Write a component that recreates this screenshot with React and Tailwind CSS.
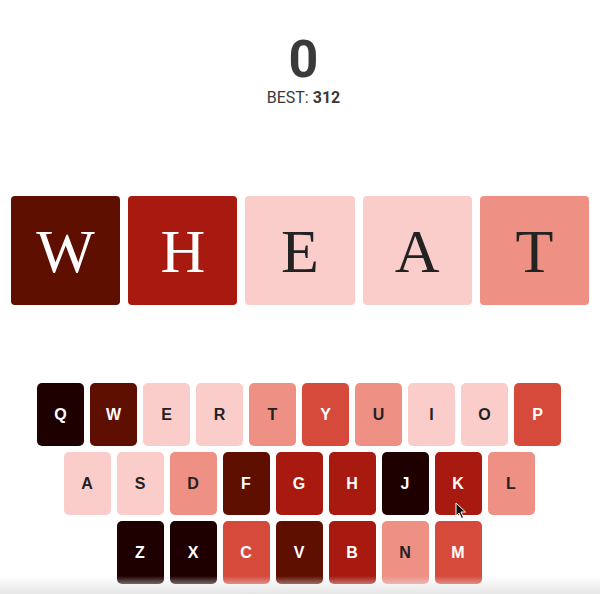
import React from 'react';

const shades = {
  0: 'bg-[#1f0000] text-white',
  1: 'bg-[#5f0f00] text-white',
  2: 'bg-[#a8190f] text-white',
  3: 'bg-[#d64a3c] text-white',
  4: 'bg-[#ef9085] text-[#222222]',
  5: 'bg-[#facdcb] text-[#222222]',
};

const tiles = [
  ['W', 1],
  ['H', 2],
  ['E', 5],
  ['A', 5],
  ['T', 4],
];

const rows = [
  [['Q', 0], ['W', 1], ['E', 5], ['R', 5], ['T', 4], ['Y', 3], ['U', 4], ['I', 5], ['O', 5], ['P', 3]],
  [['A', 5], ['S', 5], ['D', 4], ['F', 1], ['G', 2], ['H', 2], ['J', 0], ['K', 2], ['L', 4]],
  [['Z', 0], ['X', 0], ['C', 3], ['V', 1], ['B', 2], ['N', 4], ['M', 3]],
];

function Key({ letter, shade }) {
  return (
    <div
      className={`w-[47px] h-[63px] rounded-[5px] flex items-center justify-center text-[16px] font-bold font-['Liberation_Sans',Arial,sans-serif] ${shades[shade]}`}
    >
      {letter}
    </div>
  );
}

export default function App() {
  return (
    <div className="relative w-full h-[594px] bg-white overflow-hidden font-['Roboto',sans-serif]">
      {/* Score */}
      <div className="flex flex-col items-center pt-[34px] pl-[7px] text-[#3a3a3a]">
        <div className="text-[52px] font-bold leading-none">0</div>
        <div className="mt-[4px] text-[16px] leading-none">
          BEST: <span className="font-bold">312</span>
        </div>
      </div>

      {/* Word tiles */}
      <div className="mt-[90px] px-[11px] flex gap-2">
        {tiles.map(([letter, shade], i) => (
          <div
            key={i}
            className={`flex-1 h-[109px] rounded-[4px] flex items-center justify-center text-[62px] leading-none font-['Liberation_Serif',serif] ${shades[shade]} ${shade >= 4 ? 'text-[#1a1a1a]' : ''}`}
          >
            {letter}
          </div>
        ))}
      </div>

      {/* Keyboard */}
      <div className="mt-[78px] flex flex-col items-center gap-1.5 pr-[2px]">
        {rows.map((row, r) => (
          <div key={r} className="flex gap-1.5">
            {row.map(([letter, shade]) => (
              <Key key={letter} letter={letter} shade={shade} />
            ))}
          </div>
        ))}
      </div>

      {/* mouse cursor */}
      <svg className="absolute left-[455px] top-[502px] pointer-events-none" width="12" height="18" viewBox="0 0 12 18">
        <path d="M1 1 L1 14 L4 11 L6.5 16.5 L8.5 15.5 L6 10 L10.5 10 Z" fill="#111" stroke="#fff" strokeWidth="1" strokeLinejoin="round" />
      </svg>

      {/* bottom shade */}
      <div className="absolute left-0 right-0 bottom-0 h-[18px] pointer-events-none bg-gradient-to-b from-white/0 to-[#e6e6e6]" />
    </div>
  );
}
